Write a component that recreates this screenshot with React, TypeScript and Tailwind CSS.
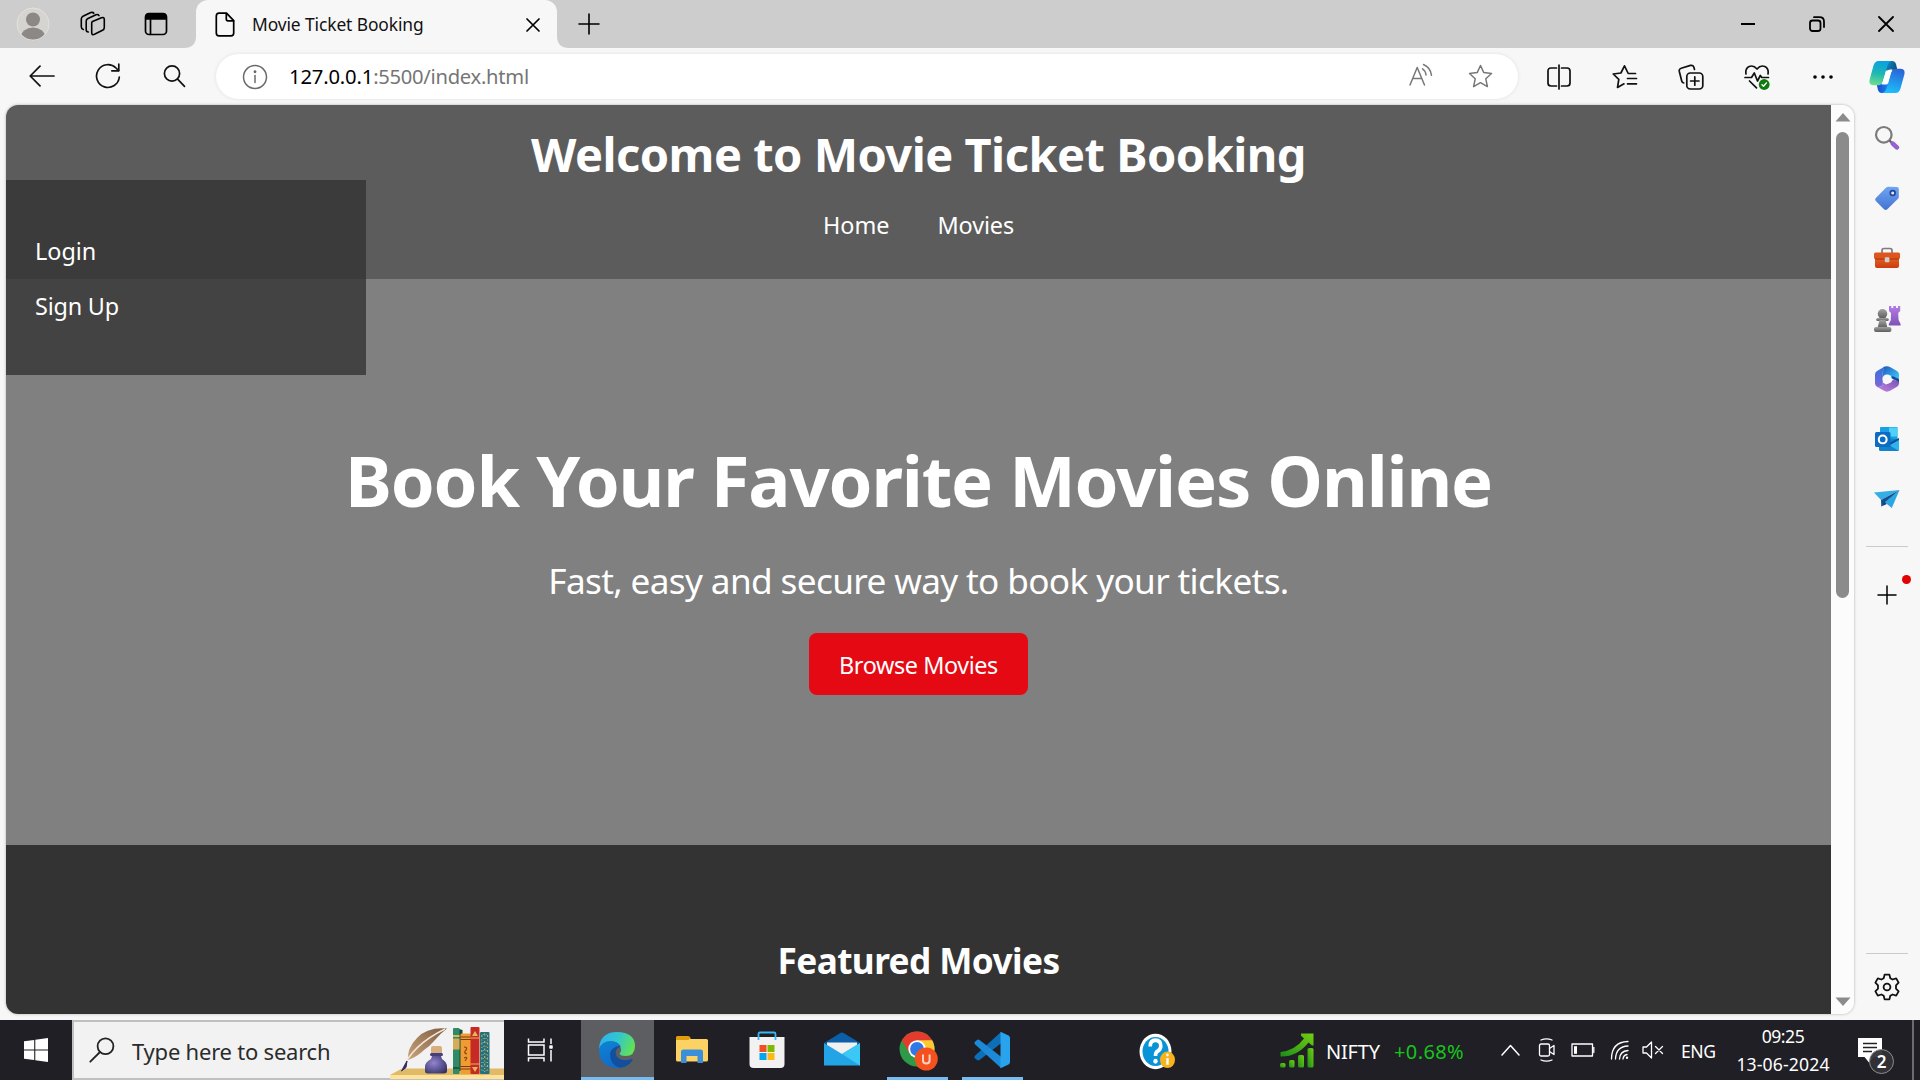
import type { ReactNode } from "react";

type IcoProps = { w: number; h: number; sw?: number; className?: string; children: ReactNode };

/* Outline icon drawn on a canvas of its own pixel size. */
function Ico({ w, h, sw = 1.5, className = "", children }: IcoProps) {
  return (
    <svg
      width={w}
      height={h}
      viewBox={`0 0 ${w} ${h}`}
      fill="none"
      stroke="currentColor"
      strokeWidth={sw}
      strokeLinecap="round"
      strokeLinejoin="round"
      className={`shrink-0 ${className}`}
    >
      {children}
    </svg>
  );
}

const STAR = "M12.5 1.5 L15.8 8.6 L23.5 9.5 L17.8 14.8 L19.4 22.6 L12.5 18.7 L5.6 22.6 L7.2 14.8 L1.5 9.5 L9.2 8.6 Z";

function TabStrip() {
  return (
    <div className="flex h-12 shrink-0 items-stretch bg-[#cdcdcd]">
      <div className="flex w-[184px] items-center">
        <svg width="34" height="34" viewBox="0 0 34 34" className="ml-4 shrink-0">
          <defs>
            <clipPath id="avatar">
              <circle cx="17" cy="17" r="15.5" />
            </clipPath>
          </defs>
          <circle cx="17" cy="17" r="16" fill="#d6d4d1" stroke="#e4e2df" />
          <g fill="#8b8885" clipPath="url(#avatar)">
            <circle cx="17" cy="12.5" r="7" />
            <ellipse cx="17" cy="30" rx="12" ry="9.5" />
          </g>
        </svg>
        <Ico w={26} h={26} sw={1.6} className="ml-[30px]">
          <path d="M12.5 10.5 L21.5 6.8 Q24.3 5.8 24.3 8.5 V16.5 Q24.3 18.5 22.5 19.3 L14.5 23.3 Q11.7 24.5 11.7 21.8 V12 Q11.7 11 12.5 10.5Z" />
          <path d="M8.3 21 Q6.2 21 6.2 18.8 V10 Q6.2 8.2 8 7.4 L16 3.8 Q18 3 19 4.6" />
          <path d="M3.3 18.5 Q1.3 18 1.3 15.8 V8 Q1.3 6 3 5.2 L10.8 1.6 Q12.8 .8 13.8 2.3" />
        </Ico>
        <Ico w={24} h={24} sw={1.7} className="ml-[38px]">
          <rect x="1.5" y="1.5" width="21" height="21" rx="3.5" />
          <path d="M2 7 V4.5 Q2 2 4.5 2 H19.5 Q22 2 22 4.5 V7Z" fill="currentColor" />
          <path d="M6.5 7 V22" />
        </Ico>
      </div>
      <svg width="12" height="48" viewBox="0 0 12 48" className="shrink-0">
        <path d="M0 48 Q12 48 12 36 V48Z" fill="#f7f7f7" />
      </svg>
      <div className="flex w-[361px] items-center rounded-t-[12px] bg-[#f7f7f7]">
        <Ico w={20} h={25} sw={1.7} className="ml-[19px]">
          <path d="M4 1.2 H11.5 L18.7 8.6 V21 Q18.7 23.8 16 23.8 H4 Q1.3 23.8 1.3 21 V4 Q1.3 1.2 4 1.2Z" />
          <path d="M11.3 1.5 V7 Q11.3 8.8 13 8.8 H18.5" />
        </Ico>
        <span className="ml-[17px] w-[274px] whitespace-nowrap pb-px text-[17.4px] leading-6 tracking-[-0.1px] text-[#111]">
          Movie Ticket Booking
        </span>
        <Ico w={14} h={14} sw={1.7} className="mt-px">
          <path d="M1 1 L13 13 M13 1 L1 13" />
        </Ico>
      </div>
      <svg width="12" height="48" viewBox="0 0 12 48" className="shrink-0">
        <path d="M12 48 Q0 48 0 36 V48Z" fill="#f7f7f7" />
      </svg>
      <div className="flex flex-1 items-center pb-px">
        <Ico w={22} h={22} sw={1.6} className="ml-[9px]">
          <path d="M11 1 V21 M1 11 H21" />
        </Ico>
      </div>
      <div className="flex items-center pb-px">
        <div className="flex w-[69px] justify-center">
          <Ico w={16} h={16} sw={2}>
            <path d="M1 8 H15" strokeLinecap="butt" />
          </Ico>
        </div>
        <div className="flex w-[69px] justify-center">
          <Ico w={16} h={16} sw={1.8}>
            <rect x="1" y="4.5" width="10.5" height="10.5" rx="2.5" />
            <path d="M5 1.2 H10.5 Q15 1.2 15 5.7 V11" />
          </Ico>
        </div>
        <div className="flex w-[69px] justify-center">
          <Ico w={16} h={16} sw={1.8}>
            <path d="M1 1 L15 15 M15 1 L1 15" />
          </Ico>
        </div>
      </div>
    </div>
  );
}

function CopilotLogo() {
  return (
    <svg width="36" height="34" viewBox="0 0 36 34">
      <defs>
        <linearGradient id="cpA" x1="0.4" y1="0" x2="0.25" y2="1">
          <stop offset="0" stopColor="#08a2e0" />
          <stop offset=".5" stopColor="#1fb6b4" />
          <stop offset="1" stopColor="#6ee08b" />
        </linearGradient>
        <linearGradient id="cpB" x1="0.7" y1="0" x2="0.4" y2="1">
          <stop offset="0" stopColor="#2a63d8" />
          <stop offset="1" stopColor="#1cc0fa" />
        </linearGradient>
        <linearGradient id="cpC" x1="0" y1="0" x2="1" y2="0.3">
          <stop offset="0" stopColor="#0aa0dc" />
          <stop offset=".6" stopColor="#0f6ea6" />
          <stop offset="1" stopColor="#0d5584" />
        </linearGradient>
        <linearGradient id="cpD" x1="0" y1="0" x2="1" y2="0">
          <stop offset="0" stopColor="#1846d2" />
          <stop offset="1" stopColor="#1b8df0" />
        </linearGradient>
      </defs>
      <path d="M15 1 H23 Q26 1 27 4 L28.5 10.5 H16Z" fill="url(#cpC)" />
      <path d="M21 33 H12.5 Q10 33 9 30 L7.5 23.5 H20Z" fill="url(#cpD)" />
      <path d="M9.5 1 H22.5 Q19.5 2 18.3 6 L14 21 Q12.7 25.3 9 25.3 H4.5 Q-.8 25.3 .8 19 L4.5 5.5 Q6 1 9.5 1Z" fill="url(#cpA)" />
      <path d="M26.5 33 H13.5 Q16.5 32 17.7 28 L22 13 Q23.3 8.7 27 8.7 H31.5 Q36.8 8.7 35.2 15 L31.500 28.500 Q30 33 26.500 33Z" fill="url(#cpB)" />
      <path d="M19.5 10 Q20 9.500 21 9.500 H23.500 Q22.300 11 21.800 13 L19 23 Q18.500 24.500 17 24.500 H12.500 Q13.500 23 14 21 L17 11.500Z" fill="#fff" />
    </svg>
  );
}

function Toolbar() {
  return (
    <div className="flex h-[57px] shrink-0 items-start bg-[#f7f7f7] pl-[9px] pt-1.5 text-[#111]">
      <div className="flex h-[45px] items-center pb-px">
        <div className="flex w-[66px] justify-center">
          <Ico w={26} h={22} sw={1.7}>
            <path d="M25 11 H1.5 M11 1.2 L1.2 11 L11 20.8" />
          </Ico>
        </div>
        <div className="flex w-[66px] justify-center">
          <Ico w={26} h={26} sw={1.7}>
            <path d="M24.3 14 A11.4 11.4 0 1 1 21 5 L23.5 7.5" />
            <path d="M23.8 1.2 V7.8 H16.8" />
          </Ico>
        </div>
        <div className="flex w-[66px] justify-center">
          <Ico w={24} h={24} sw={1.7}>
            <circle cx="10" cy="9.5" r="7.6" />
            <path d="M15.6 15.1 L22.5 22.3" />
          </Ico>
        </div>
      </div>
      <div className="ml-[9px] flex h-[45px] w-[1302px] items-center rounded-full bg-white shadow-[0_0_4px_rgba(0,0,0,0.09)]">
        <Ico w={26} h={26} sw={1.5} className="ml-[26px] text-[#6b6b6b]">
          <circle cx="13" cy="13" r="11.5" />
          <path d="M13 11.5 V18.5" />
          <circle cx="13" cy="7.8" r=".7" fill="currentColor" />
        </Ico>
        <p className="ml-[21px] flex-1 whitespace-nowrap pb-0.5 text-[20.2px] leading-7 tracking-[-0.28px] text-[#757575]">
          <span className="tracking-[-0.15px] text-black">127.0.0.1</span>:5500/index.html
        </p>
        <Ico w={26} h={26} sw={1.5} className="mb-0.5 text-[#777]">
          <path d="M2 22 L9.2 4.5 L16.5 22 M4.7 15.5 H13.8" />
          <path d="M14.5 5.8 Q17.5 7.5 18 12 M15.5 1.5 Q22.5 4.5 23.5 12.3" />
        </Ico>
        <Ico w={25} h={25} sw={1.5} className="ml-[34px] mr-[25px] text-[#777]">
          <path d={STAR} />
        </Ico>
      </div>
      <div className="ml-[8px] flex h-[45px] items-center">
        <div className="flex w-[66px] justify-center">
          <Ico w={24} h={26} sw={1.7}>
            <path d="M9.5 4 H4 Q1 4 1 7 V19 Q1 22 4 22 H9.5 M14.5 4 H20 Q23 4 23 7 V19 Q23 22 20 22 H14.5 M12 1 V25" />
          </Ico>
        </div>
        <div className="flex w-[66px] justify-center">
          <Ico w={26} h={26} sw={1.7}>
            <path d="M23.5 9.5 H16.2 L12.5 1.8 L8.9 9 L1.2 10 L6.8 15.3 L5.5 23.5 L12 19.8 M15.5 14.5 H24.5 M15.5 19.8 H24.5" />
          </Ico>
        </div>
        <div className="flex w-[66px] justify-center">
          <Ico w={26} h={26} sw={1.7}>
            <rect x="8.8" y="9" width="16" height="16" rx="3.5" />
            <path d="M16.8 12.8 V21.2 M12.6 17 H21 M5.8 19 Q4.2 18.8 3.8 17.3 L1.3 7.5 Q.8 5 3.2 4.3 L12.5 1.4 Q15 .8 15.9 3.2 L16.5 5.5" />
          </Ico>
        </div>
        <div className="flex w-[66px] justify-center">
          <Ico w={26} h={26} sw={1.7}>
            <path d="M2 10 Q1 4.5 5.2 2.5 Q9.5 .8 13 5 Q16.5 .8 20.8 2.5 Q25 4.5 24 10 M1 13.5 H7.5 L10.3 9 L13.5 17 L16.3 11.5 L17.8 13.5 H24.5 M5.5 17 L12.5 23.8" />
            <circle cx="20.2" cy="20.5" r="5.4" fill="#107c10" stroke="none" />
            <path d="M18 20.8 L19.5 22.2 L22.4 18.9" stroke="#fff" strokeWidth="1.4" />
          </Ico>
        </div>
        <div className="flex w-[66px] justify-center">
          <svg width="22" height="6" viewBox="0 0 22 6">
            <circle cx="3" cy="3" r="1.8" />
            <circle cx="11" cy="3" r="1.8" />
            <circle cx="19" cy="3" r="1.8" />
          </svg>
        </div>
        <div className="flex w-[62px] justify-center">
          <CopilotLogo />
        </div>
      </div>
    </div>
  );
}

function Site() {
  return (
    <main className="relative flex w-[1825px] flex-col text-white">
      <header className="flex h-[174px] shrink-0 flex-col items-center bg-[#5c5c5c] pt-[17px]">
        <h1 className="whitespace-nowrap text-[47px] font-bold leading-[64px] tracking-[-0.51px]">
          Welcome to Movie Ticket Booking
        </h1>
        <nav className="mt-[21px] flex gap-[48px] text-[23.4px] leading-9">
          <a>Home</a>
          <a className="tracking-[-0.1px]">Movies</a>
        </nav>
      </header>
      <section className="flex h-[566px] shrink-0 flex-col items-center bg-[#808080] pt-[153px]">
        <h2 className="whitespace-nowrap text-[70.5px] font-bold leading-[96px] tracking-[-1.16px]">
          Book Your Favorite Movies Online
        </h2>
        <p className="mt-7 whitespace-nowrap text-[35.2px] leading-[48px] tracking-[-0.65px]">
          Fast, easy and secure way to book your tickets.
        </p>
        <button className="mt-[29px] h-[62px] w-[219px] whitespace-nowrap rounded-[8px] bg-[#e50914] pt-[2px] text-[23.4px] leading-9 tracking-[-0.41px]">
          Browse Movies
        </button>
      </section>
      <section className="flex flex-1 flex-col items-center bg-[#333] pt-[91px]">
        <h3 className="whitespace-nowrap text-[35.2px] font-bold leading-[48px] tracking-[-0.58px]">Featured Movies</h3>
      </section>
      <aside className="absolute left-0 top-[75px] flex h-[195px] w-[360px] flex-col gap-[19px] bg-[#333333]/80 pl-[29px] pt-[53px] text-[23.4px] leading-9">
        <a>Login</a>
        <a className="tracking-[-0.2px]">Sign Up</a>
      </aside>
    </main>
  );
}

function Scrollbar() {
  return (
    <div className="flex w-[23px] flex-col items-center bg-[#fcfcfc] py-2">
      <svg width="16" height="9" viewBox="0 0 16 9">
        <path d="M.5 8.5 L8 0 L15.5 8.5Z" fill="#8b8b8b" />
      </svg>
      <div className="mt-[10px] h-[466px] w-[13px] rounded-full bg-[#8b8b8b]" />
      <div className="flex-1" />
      <svg width="16" height="9" viewBox="0 0 16 9">
        <path d="M.5 .5 L8 9 L15.5 .5Z" fill="#8b8b8b" />
      </svg>
    </div>
  );
}

const sideIcons: ReactNode[] = [
  <svg key="search" width="26" height="26" viewBox="0 0 26 26" fill="none">
    <circle cx="9.8" cy="9.8" r="7.8" stroke="#7b7b7b" strokeWidth="2.2" />
    <path d="M15.5 15.5 L18 18" stroke="#666" strokeWidth="2.4" />
    <path d="M18.8 18.6 L22.8 22.4" stroke="#9560cf" strokeWidth="4.6" strokeLinecap="round" />
  </svg>,
  <svg key="tag" width="26" height="26" viewBox="0 0 26 26">
    <defs>
      <linearGradient id="tagG" x1="0" y1="0" x2="0" y2="1">
        <stop offset="0" stopColor="#6ea6f2" />
        <stop offset="1" stopColor="#4673d2" />
      </linearGradient>
    </defs>
    <path d="M12.2 2.5 Q13 1.7 14.2 1.7 L22.8 2 Q24.8 2 24.8 4 V12 Q24.8 13 24 13.8 L13.3 24.3 Q11.6 25.5 10 24.2 L1.8 16 Q.4 14.4 1.8 12.9Z" fill="url(#tagG)" />
    <circle cx="18.7" cy="8" r="2.4" fill="#dfe9fb" stroke="#23449a" strokeWidth="1.7" />
  </svg>,
  <svg key="tools" width="28" height="22" viewBox="0 0 28 22">
    <defs>
      <linearGradient id="boxG" x1="0" y1="0" x2="0" y2="1">
        <stop offset="0" stopColor="#e8672e" />
        <stop offset="1" stopColor="#c93d0c" />
      </linearGradient>
    </defs>
    <path d="M9 6 V3.5 Q9 1.5 11 1.5 H17 Q19 1.5 19 3.5 V6" fill="none" stroke="#7c7c7c" strokeWidth="1.7" />
    <rect x="2" y="9" width="24" height="12" rx="2" fill="url(#boxG)" />
    <rect x="1" y="5.5" width="26" height="6.5" rx="1.5" fill="#dd561d" />
    <path d="M2 12 H26" stroke="#a93205" />
    <rect x="11.8" y="10.2" width="4.6" height="5" rx="1" fill="#cfcfcf" />
  </svg>,
  <svg key="games" width="28" height="28" viewBox="0 0 28 28">
    <defs>
      <linearGradient id="rookG" x1="0" y1="0" x2="0" y2="1">
        <stop offset="0" stopColor="#b57be8" />
        <stop offset="1" stopColor="#7d54b4" />
      </linearGradient>
      <linearGradient id="pawnG" x1="0" y1="0" x2="0" y2="1">
        <stop offset="0" stopColor="#a2a2a2" />
        <stop offset="1" stopColor="#5c5c5c" />
      </linearGradient>
    </defs>
    <path d="M16 1 H18.3 V3 H20.3 V1 H23 V3 H25 V1 H27.2 V6 L25.2 8 L25.6 15 L27.6 19 V20.5 H15.8 V19 L17.8 15 L18 8 L16 6Z" fill="url(#rookG)" />
    <g fill="url(#pawnG)">
      <circle cx="9.5" cy="8.8" r="4.8" />
      <rect x="3.2" y="13" width="12.6" height="3" rx="1.5" />
      <path d="M6.5 15 H12.5 L14.5 23 H4.5Z" />
      <rect x="1" y="22" width="17.4" height="5" rx="2" />
    </g>
  </svg>,
  <svg key="m365" width="26" height="28" viewBox="0 0 26 28">
    <defs>
      <linearGradient id="mA" x1="0" y1="0" x2="1" y2="1">
        <stop offset="0" stopColor="#1c55b8" />
        <stop offset=".5" stopColor="#2f9be0" />
        <stop offset="1" stopColor="#4fd2f8" />
      </linearGradient>
      <linearGradient id="mB" x1="0" y1="0" x2="0" y2="1">
        <stop offset="0" stopColor="#2f73dc" />
        <stop offset="1" stopColor="#8067d6" />
      </linearGradient>
      <linearGradient id="mC" x1="0" y1="1" x2="1" y2="0">
        <stop offset="0" stopColor="#c088e0" />
        <stop offset="1" stopColor="#7a4fb4" />
      </linearGradient>
    </defs>
    <path d="M9.500 2 Q13 .2 16.500 2.200 L23 6 Q25 7.300 25 9.500 V17.500 L17 13 V10.500 L8.500 12Z" fill="url(#mA)" />
    <path d="M9.500 2.200 L3 6 Q1 7.200 1 9.500 V18.500 Q1 20.500 3 21.700 Q6 22.700 8.800 20 V7 Q8.800 4 11 1.500Z" fill="url(#mB)" />
    <path d="M2.500 21.500 L9.500 25.600 Q13 27.700 16.500 25.600 L23 21.800 Q25 20.500 25 18.500 V17 L19 14.500 L17 17.500 L12 19.500 L8.800 17.500 V19 Q8.500 22.500 2.500 21.500Z" fill="url(#mC)" />
    <path d="M17.500 13 L25 17.300 V14 L18.500 11Z" fill="#174a9c" />
    <circle cx="13" cy="14" r="4.500" fill="#f7f7f7" />
  </svg>,
  <svg key="outlook" width="26" height="26" viewBox="0 0 26 26">
    <rect x="6" y="1" width="17.500" height="18" rx="1" fill="#1a9ee4" />
    <rect x="15" y="1.500" width="8.500" height="9" fill="#4fd0f8" />
    <path d="M5 12 L25 13 V23.500 Q25 25 23.500 25 H6.500 Q5 25 5 23.500Z" fill="#1382cc" />
    <path d="M25 12.500 L14 18.500 L25 25Z" fill="#2fb4ee" />
    <path d="M25 12 V14 L15 19.500 L14 17.500Z" fill="#0b4f94" />
    <rect x="1" y="6" width="15.500" height="15" rx="1.500" fill="#0b6cc4" />
    <circle cx="8.700" cy="13.400" r="3.900" fill="none" stroke="#fff" strokeWidth="2.100" />
  </svg>,
  <svg key="send" width="28" height="20" viewBox="0 0 28 20">
    <path d="M1 3.500 L26.500 1 L8 11Z" fill="#35aee6" />
    <path d="M8 11 L26.500 1 L8.300 17.500Z" fill="#14508e" />
    <path d="M26.500 1 L18.800 19 L11.800 13.200Z" fill="#2aa7e3" />
    <path d="M11.800 13.200 L8.300 17.500 L13.800 15Z" fill="#0d3e75" />
  </svg>,
];

function EdgeSidebar() {
  return (
    <div className="flex flex-1 flex-col items-center pt-[3px]">
      {sideIcons.map((icon, i) => (
        <div key={i} className="flex h-[60.2px] items-center justify-center">
          {icon}
        </div>
      ))}
      <div className="mt-[17px] h-px w-[42px] bg-[#cbcbcb]" />
      <div className="relative mt-[38px] text-black">
        <Ico w={20} h={20} sw={1.500}>
          <path d="M10 1 V19 M1 10 H19" />
        </Ico>
        <span className="absolute -top-[10px] left-[25px] h-[9px] w-[9px] rounded-full bg-[#e30000]" />
      </div>
      <div className="flex-1" />
      <div className="h-px w-[42px] bg-[#cbcbcb]" />
      <Ico w={26} h={28} sw={1.800} className="mb-[13px] mt-[19px] text-[#111]">
        <path d="M10.6 1.6 H15.4 L16.3 5.2 L18.6 6.5 L22.2 5.4 L24.6 9.6 L22 12.3 V15.7 L24.6 18.4 L22.2 22.6 L18.6 21.5 L16.3 22.8 L15.4 26.4 H10.6 L9.7 22.8 L7.4 21.5 L3.8 22.6 L1.4 18.4 L4 15.7 V12.3 L1.4 9.6 L3.8 5.4 L7.4 6.5 L9.7 5.2Z" />
        <circle cx="13" cy="14" r="3.400" />
      </Ico>
    </div>
  );
}

function SearchArt() {
  return (
    <svg width="114" height="58" viewBox="0 0 114 58" className="shrink-0">
      <defs>
        <linearGradient id="quill" x1="0" y1="1" x2="1" y2="0">
          <stop offset="0" stopColor="#c9a37b" />
          <stop offset="1" stopColor="#7c5d44" />
        </linearGradient>
        <radialGradient id="ink" cx=".4" cy=".4" r=".7">
          <stop offset="0" stopColor="#9584cf" />
          <stop offset="1" stopColor="#343468" />
        </radialGradient>
      </defs>
      <path d="M12 47.500 H114 V54 H0Z" fill="#e0ba66" />
      <path d="M0 54 H114 V58 H0Z" fill="#ffe29a" />
      <path d="M18 39 Q17 27 27 17 Q37 6 57 7.500 Q51 12 45 19 Q40 25 34 29 Q27 36 18 39Z" fill="url(#quill)" />
      <path d="M12 49 Q22 24 55 8" fill="none" stroke="#f4e6d4" strokeWidth="1.400" />
      <path d="M17 40 L11.500 50 L16 46.500Z" fill="#312a68" stroke="#312a68" />
      <rect x="41" y="25" width="11" height="9" rx="2" fill="#d9ae7e" />
      <rect x="40" y="32" width="13" height="3" rx="1.500" fill="#43407c" />
      <path d="M42 35 H51 L52 38 Q57 41 57 46 V50 Q57 52.500 54 52.500 H38 Q35 52.500 35 50 V46 Q35 41 41 38Z" fill="url(#ink)" />
      <g>
        <path d="M69 8 L72.500 9 V50 H69Z" fill="#174a3a" />
        <rect x="63" y="7" width="6.500" height="46" rx="1" fill="#2f8a65" />
        <rect x="63" y="14" width="6.500" height="2" fill="#e0b65c" />
        <rect x="63" y="17.500" width="6.500" height="11" fill="#d5ad5a" />
        <rect x="63" y="46" width="6.500" height="2" fill="#1b5a42" />
        <rect x="70.500" y="12.500" width="10.500" height="40.500" rx="1" fill="#f19c33" />
        <path d="M70.500 16 H81 M70.500 18.500 H81 M70.500 45.500 H81 M70.500 48 H81" stroke="#7c3c11" strokeWidth="1.200" />
        <path d="M74 26 Q78 26 76 29 Q73 32 77 33 M74 37 Q79 35 75 40" fill="none" stroke="#8c4512" strokeWidth="1.200" />
        <rect x="80.500" y="6" width="9" height="47" rx="1" fill="#c62a25" />
        <path d="M82 15 L85 10 L88 15Z M82 46 L85 51 L88 46Z" fill="#e5b45a" />
        <path d="M80.500 17 H89.500 M80.500 43 H89.500" stroke="#e5b45a" />
        <rect x="90" y="11" width="9.500" height="42" rx="1" fill="#27707a" />
        <path d="M91.800 14 V50 M94.700 12.500 V51 M97.600 14 V50" stroke="#d3b467" strokeDasharray="2 2.500 1 2" />
        <path d="M93.300 13 V50 M96.200 13 V50" stroke="#7fb9b0" strokeDasharray="1 3" strokeWidth=".8" />
      </g>
    </svg>
  );
}

function EdgeLogo() {
  return (
    <svg width="38" height="38" viewBox="0 0 38 38" className="mr-[2px]">
      <defs>
        <linearGradient id="edTop" x1="0" y1="0.200" x2="1" y2="0.500">
          <stop offset="0" stopColor="#2fb0ee" />
          <stop offset=".5" stopColor="#31c6cf" />
          <stop offset="1" stopColor="#62e255" />
        </linearGradient>
        <linearGradient id="edLow" x1="0" y1="0" x2="0.600" y2="1">
          <stop offset="0" stopColor="#0c84d6" />
          <stop offset="1" stopColor="#1468c4" />
        </linearGradient>
      </defs>
      <path d="M1 18 Q2 1 19 1 Q37 1.500 37 15 Q37 25 27.500 25 Q22 25 21.500 22.500 Q24 20 22.500 16 Q20 10.500 13 10.500 Q5 10.500 1 18Z" fill="url(#edTop)" />
      <path d="M1 18 Q4 10 12.500 10 Q20 10.500 22.500 15 Q15.500 14 15 21 Q15 33 27 33 Q31 33 34.500 29 Q29 37 19 37 Q1 36 1 18Z" fill="url(#edLow)" />
      <path d="M22 14.700 Q13 16 12 23 Q12 34 22 36.800 Q31 36 34.800 28.600 Q34.500 27.500 33 28.300 Q23.500 31.500 18.500 25 Q15.500 18.500 22.500 15.500Z" fill="#124f9e" />
    </svg>
  );
}

function ChromeLogo() {
  return (
    <svg width="40" height="42" viewBox="0 0 40 42">
      <circle cx="19" cy="19" r="17.500" fill="#2c9a46" />
      <path d="M19 19 L3.800 10.300 A17.500 17.500 0 0 1 34.200 10.300Z" fill="#e33b2e" />
      <path d="M19 10.300 H34.200 A17.500 17.500 0 0 1 19 36.500 L26.500 23.400Z" fill="#fcc934" />
      <path d="M3.800 10.300 L11.500 23.400 L19 19 V10.300Z" fill="#e33b2e" />
      <circle cx="19" cy="19" r="8.700" fill="#fff" />
      <circle cx="19" cy="19" r="6.900" fill="#2f78e8" />
      <circle cx="28.300" cy="29" r="11.500" fill="#f4511e" />
      <path d="M25 24.500 V30.500 Q25 33.500 28.300 33.500 Q31.600 33.500 31.600 30.500 V24.500" fill="none" stroke="#fbd3c5" strokeWidth="2" />
    </svg>
  );
}

function Taskbar() {
  return (
    <div className="flex h-[60px] shrink-0 items-stretch bg-[#1f1f25] text-white">
      <div className="flex w-[72px] items-center justify-center">
        <svg width="24" height="24" viewBox="0 0 24 24" fill="#fff">
          <path d="M0 3.300 L10.200 1.900 V11.500 H0Z M11.300 1.700 L24 0 V11.500 H11.300Z M0 12.500 H10.200 V22.100 L0 20.700Z M11.300 12.500 H24 V24 L11.300 22.300Z" />
        </svg>
      </div>
      <div className="flex w-[432px] items-center border-2 border-r-0 border-[#c0c0c0] bg-[#f2f2f2] text-[#222]">
        <Ico w={26} h={26} sw={1.800} className="ml-[15px]">
          <circle cx="16.500" cy="9.200" r="7.900" />
          <path d="M11 15 L1.300 24.700" />
        </Ico>
        <span className="ml-[17px] w-[258px] whitespace-nowrap pt-px text-[22px] leading-8 tracking-[-0.22px] text-[#2b2b2b]">
          Type here to search
        </span>
        <SearchArt />
      </div>
      <div className="flex w-[77px] items-center pl-[23px]">
        <Ico w={26} h={26} sw={1.500}>
          <path d="M1.500 1.500 V5 H17 V1.500 M1.500 24.500 V21 H17 V24.500" strokeLinecap="butt" strokeLinejoin="miter" />
          <rect x="1.500" y="8" width="15.500" height="10" strokeLinejoin="miter" />
          <path d="M24 1.500 V7 M24 13 V24.500" strokeLinecap="butt" />
          <rect x="23" y="9" width="2" height="2" fill="#fff" />
        </Ico>
      </div>
      <div className="flex w-[73px] items-center justify-center border-b-[3px] border-[#78bbf0] bg-[#5d5e62] pt-[3px]">
        <EdgeLogo />
      </div>
      <div className="flex w-[76px] items-center justify-center">
        <svg width="34" height="30" viewBox="0 0 34 30">
          <path d="M1 3 Q1 1.500 2.500 1.500 H13 L16 4 H31.500 Q33 4 33 5.500 V25 Q33 26.500 31.500 26.500 H2.500 Q1 26.500 1 25Z" fill="#fdd264" />
          <path d="M1 2.500 Q1 1 2.500 1 H13 Q15.500 1.500 15.500 3 L13.500 5 H1Z" fill="#e09d0e" />
          <path d="M6 28 V17 Q6 14.500 8.500 14.500 H25.500 Q28 14.500 28 17 V28 H22.500 V21 H11.500 V28Z" fill="#3a8fdb" />
        </svg>
      </div>
      <div className="flex w-[74px] items-center justify-center">
        <svg width="36" height="38" viewBox="0 0 36 38">
          <path d="M9.500 9 V3 Q9.500 1.500 11 1.500 H25 Q26.500 1.500 26.500 3 V9" fill="none" stroke="#3cb6ef" strokeWidth="1.800" />
          <path d="M.5 6 H35.500 V33 Q35.500 37 31.500 37 H4.500 Q.5 37 .5 33Z" fill="#f2f2f2" />
          <path d="M9.500 6 V9 M26.500 6 V9" stroke="#3cb6ef" strokeWidth="1.800" />
          <rect x="10.500" y="14" width="7" height="7" fill="#f05022" />
          <rect x="18.500" y="14" width="7" height="7" fill="#7fb900" />
          <rect x="10.500" y="22" width="7" height="7" fill="#05a4ef" />
          <rect x="18.500" y="22" width="7" height="7" fill="#fdb813" />
        </svg>
      </div>
      <div className="flex w-[76px] items-center justify-center pb-0.5">
        <svg width="36" height="34" viewBox="0 0 36 34">
          <path d="M0 11 L16 1.200 Q18 0 20 1.200 L36 11 L18 20Z" fill="#0b5ea8" />
          <path d="M3 10.500 H33 V25 H3Z" fill="#f0f0f0" />
          <path d="M0 11 L18 22 L36 11 V33.500 H0Z" fill="#23a4e6" />
          <path d="M18 22 L36 11 V33.500Z" fill="#3ac8f4" />
        </svg>
      </div>
      <div className="flex w-[75px] justify-center">
        <div className="flex w-[61px] items-center justify-center border-b-[3px] border-[#78bbf0] pt-1">
          <ChromeLogo />
        </div>
      </div>
      <div className="flex w-[75px] justify-center">
        <div className="flex w-[61px] items-center justify-center border-b-[3px] border-[#78bbf0] pr-[2px] pt-[3px]">
          <svg width="36" height="38" viewBox="0 0 36 38">
            <path d="M27 1 L1.200 24.500 Q-.2 26 1 27.300 L3 29 Q4.200 29.800 5.500 28.900 L30 10Z" fill="#0d6fb8" />
            <path d="M27 37 L1.200 13.500 Q-.2 12 1 10.700 L3 9 Q4.200 8.200 5.500 9.100 L30 28Z" fill="#1c8ad6" />
            <path d="M26.500 .8 L34.500 4.500 Q36 5.300 36 7 V31 Q36 32.700 34.500 33.500 L26.500 37.200Z" fill="#2aa3ee" />
          </svg>
        </div>
      </div>
      <div className="flex w-[250px] items-center pl-[109px] pt-1">
        <svg width="37" height="40" viewBox="0 0 37 36" preserveAspectRatio="none">
          <circle cx="16.500" cy="17.500" r="16" fill="#fff" />
          <circle cx="16.500" cy="17.500" r="13" fill="#0a94d8" />
          <path d="M11.200 13 Q11.200 7.500 16.500 7.500 Q21.800 7.500 21.800 12.500 Q21.800 15.500 18.500 17.300 Q16.500 18.500 16.500 21.500" fill="none" stroke="#fff" strokeWidth="3.600" />
          <circle cx="16.500" cy="26.300" r="2.200" fill="#fff" />
          <circle cx="28.500" cy="25" r="7.500" fill="#f8b31c" />
          <path d="M28.500 23.500 V29.500" stroke="#fff" strokeWidth="2.400" />
          <circle cx="28.500" cy="20.700" r="1.300" fill="#fff" />
        </svg>
      </div>
      <div className="flex flex-1 items-center">
        <svg width="34" height="35" viewBox="0 0 34 35" className="shrink-0">
          <defs>
            <linearGradient id="nifty" x1="0" y1="1" x2="1" y2="0">
              <stop offset="0" stopColor="#1c8e17" />
              <stop offset="1" stopColor="#74cf12" />
            </linearGradient>
          </defs>
          <g fill="url(#nifty)">
            <rect x="0" y="30" width="5.500" height="4.500" rx="1.500" />
            <rect x="9" y="27" width="5.500" height="7.500" rx="1.500" />
            <rect x="18" y="22" width="6" height="12.500" rx="1.500" />
            <rect x="27.500" y="15" width="6" height="19.500" rx="1.500" />
            <path d="M.5 19 Q15 17.500 24 5.500 L21 2.800 V.5 H33.500 V12.500 H32 L28.500 9.500 Q17 24 .5 23.500Z" />
          </g>
        </svg>
        <span className="ml-[12px] w-[68px] whitespace-nowrap pt-[3px] text-[20px] leading-7 tracking-[-0.2px]">NIFTY</span>
        <span className="w-[107px] whitespace-nowrap pt-[3px] text-[20px] leading-7 tracking-[0.4px] text-[#18c41c]">+0.68%</span>
        <Ico w={19} h={12} sw={1.500}>
          <path d="M1 11 L9.500 1.500 L18 11" />
        </Ico>
        <Ico w={18} h={24} sw={1.300} className="ml-[18px]">
          <rect x="1.500" y="6" width="10" height="12" rx="1.500" />
          <path d="M11.500 10.500 L16 7.500 V16.500 L11.500 13.500 M3 2 Q8.500 -.3 14 2 M3 22 Q8.500 24.300 14 22" />
        </Ico>
        <Ico w={24} h={14} sw={1.300} className="ml-[15px]">
          <rect x="1" y="1" width="20.500" height="12" />
          <rect x="3" y="3.200" width="3" height="7.600" fill="#fff" stroke="none" />
          <path d="M22.800 4.500 V9.500" />
        </Ico>
        <Ico w={20} h={20} sw={1.300} className="ml-[15px]">
          <path d="M1.500 19 Q1.500 2 18 1.500" />
          <path d="M5.500 19 Q6 6.500 18 6" />
          <path d="M9.500 19 Q10 11 18 10.500" />
          <path d="M13 19 Q13.500 15 17 14.500" />
          <circle cx="17" cy="17.800" r="1.200" fill="#fff" stroke="none" />
        </Ico>
        <Ico w={22} h={18} sw={1.300} className="ml-[12px]">
          <path d="M1 6 H4.500 L9.500 1 V17 L4.500 12 H1Z M13.500 5.500 L20.500 12.500 M20.500 5.500 L13.500 12.500" />
        </Ico>
        <span className="ml-[17px] pt-px text-[17.600px] leading-6 tracking-[-0.5px]">ENG</span>
      </div>
      <div className="flex w-[112px] flex-col items-center pt-[2px] text-[17.600px] leading-7">
        <span className="tracking-[-0.45px]">09:25</span>
        <span className="whitespace-nowrap tracking-[0.14px]">13-06-2024</span>
      </div>
      <div className="relative flex w-[73px] pl-[19px] pt-[18px]">
        <svg width="24" height="25" viewBox="0 0 24 25">
          <path d="M0 0 H24 V19 H16 L11 24.500 L6.500 19 H0Z" fill="#fff" />
          <path d="M5 5.500 H19 M5 9.500 H19 M5 13.500 H14" stroke="#222" strokeWidth="1.300" />
        </svg>
        <span className="absolute left-[30px] top-[29px] flex h-[25px] w-[25px] items-center justify-center rounded-full border border-[#8d8d8d] bg-[#333336]/95 text-[17px] font-semibold">
          2
        </span>
      </div>
      <div className="w-[8px] border-l-2 border-[#6b6b70]" />
    </div>
  );
}

export default function App() {
  return (
    <div className="flex h-[1080px] w-[1920px] flex-col overflow-hidden bg-[#f7f7f7] font-['Noto_Sans','Open_Sans',sans-serif]">
      <TabStrip />
      <Toolbar />
      <div className="flex h-[915px] shrink-0 pb-1.5 pl-1.5">
        <div className="flex w-[1848px] overflow-hidden rounded-[12px] shadow-[0_0_3px_rgba(0,0,0,0.3)]">
          <Site />
          <Scrollbar />
        </div>
        <EdgeSidebar />
      </div>
      <Taskbar />
    </div>
  );
}
